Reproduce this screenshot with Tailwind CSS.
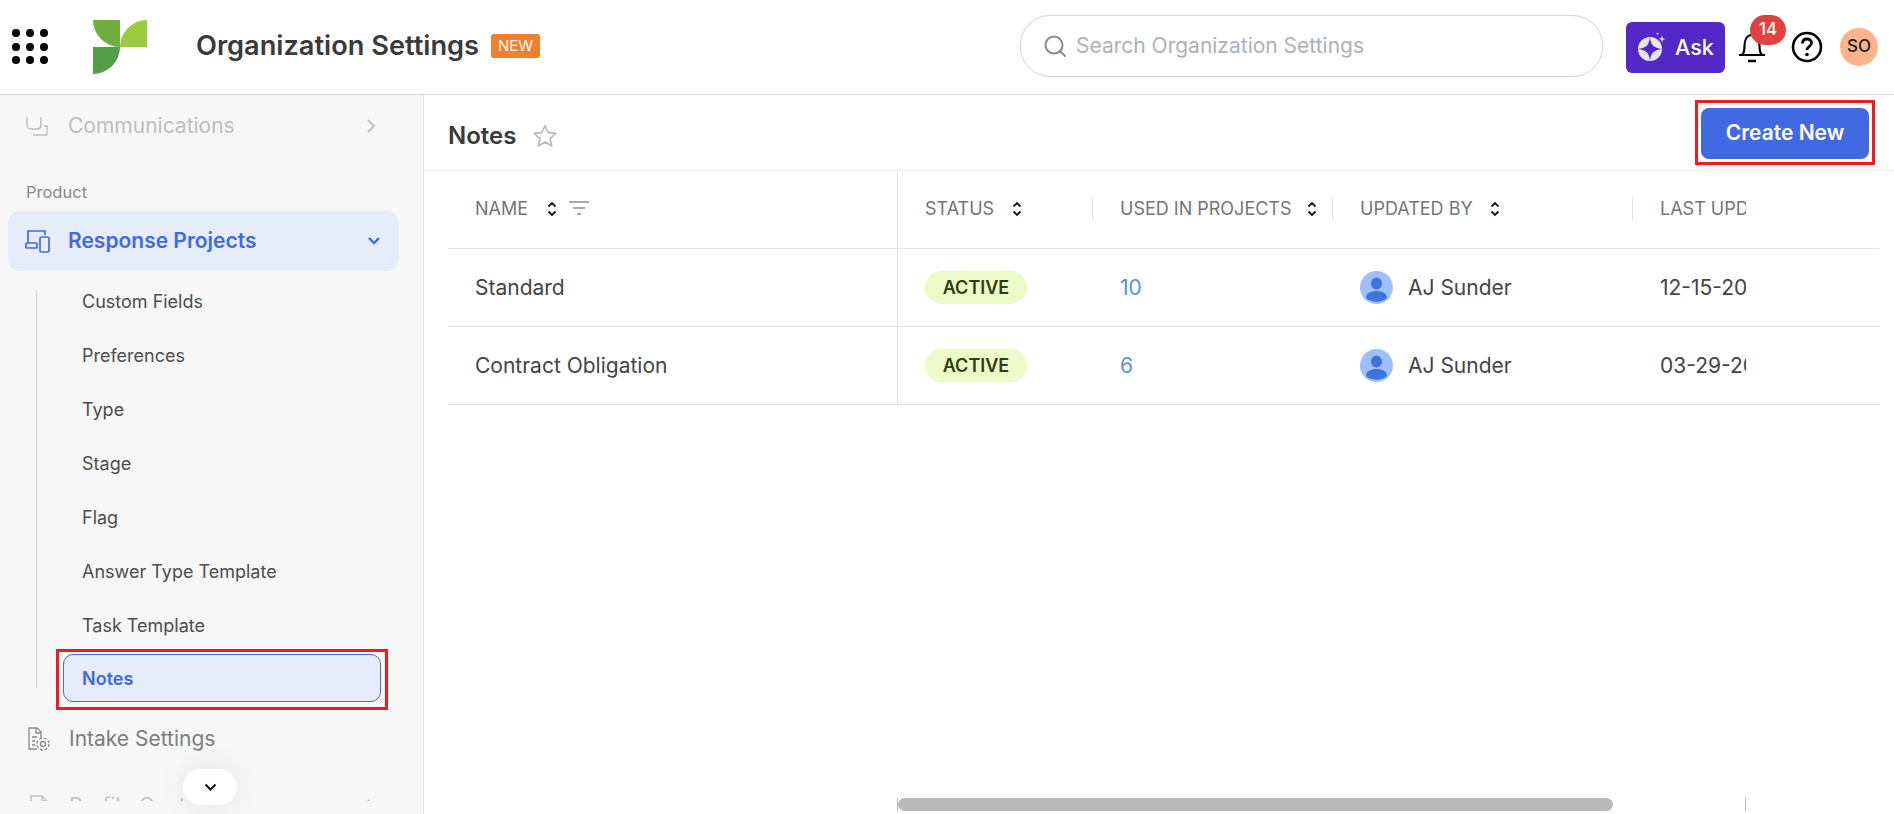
<!doctype html>
<html>
<head>
<meta charset="utf-8">
<script src="https://cdn.jsdelivr.net/npm/@tailwindcss/browser@4"></script>
</head>
<body class="h-[814px] w-[1894px] overflow-hidden bg-white font-['Inter',sans-serif] text-[#444]">
<header class="flex h-[95px] items-center border-b border-[#d4d4d4] bg-white">
  <svg class="ml-[12px] h-[36px] w-[40px]" viewBox="0 0 40 36" fill="#000"><circle cx="4" cy="4" r="4"/><circle cx="18" cy="4" r="4"/><circle cx="32" cy="4" r="4"/><circle cx="4" cy="18" r="4"/><circle cx="18" cy="18" r="4"/><circle cx="32" cy="18" r="4"/><circle cx="4" cy="31" r="4"/><circle cx="18" cy="31" r="4"/><circle cx="32" cy="31" r="4"/></svg>
  <svg class="ml-[41px] mb-[1px] h-[54px] w-[54px]" viewBox="0 0 54 54"><path d="M0 0H27V27A27 27 0 0 1 0 0Z" fill="#70ae40"/><path d="M27 27H54V0A27 27 0 0 0 27 27Z" fill="#9ccb3f"/><path d="M0 27H27A27 27 0 0 1 0 54Z" fill="#549e47"/></svg>
  <h1 class="ml-[49px] -mt-[2px] text-[27.200px] font-semibold whitespace-nowrap text-[#3a3a3a]">Organization Settings</h1>
  <span class="ml-[12px] -mt-[2px] flex h-[24px] w-[49px] items-center justify-center rounded-[3px] bg-[#f07f2f] text-[15px] text-white">NEW</span>
  <div class="ml-[480px] -mt-[2px] flex h-[62px] w-[583px] items-center rounded-[30px] border border-[#d4d4d4] pl-[22px]">
    <svg class="h-[24px] w-[24px]" viewBox="0 0 24 24" fill="none" stroke="#8a8a8a" stroke-width="2"><circle cx="11" cy="11" r="8.500"/><path d="M17 17l5 5" stroke-linecap="round"/></svg>
    <span class="ml-[9px] text-[21px] text-[#abb2b9]">Search Organization Settings</span>
  </div>
  <button class="ml-[23px] flex h-[51px] w-[99px] items-center rounded-[6px] bg-[#5229c7] pl-[12px] text-[21.500px] font-medium text-white">
    <svg class="h-[32px] w-[32px] shrink-0" viewBox="0 0 32 32"><circle cx="12" cy="18" r="12" fill="#e6e6e6"/><path fill="#5229c7" d="M12 6c.8 8 3.500 11 12 12c-8.500 1-11.200 4-12 12c-.8-8-3.500-11-12-12c8.500-1 11.200-4 12-12Z"/><path fill="#e6e6e6" d="M24 4c.4 3 1 3.700 3.500 4c-2.500.3-3.100 1-3.500 4c-.4-3-1-3.700-3.500-4c2.500-.3 3.100-1 3.500-4ZM19.500 1c.2 1.200.5 1.500 1.500 1.700c-1 .2-1.300.5-1.500 1.700c-.2-1.200-.5-1.500-1.500-1.700c1-.2 1.300-.5 1.500-1.700Z"/></svg>
    <span class="ml-[5px]">Ask</span>
  </button>
  <div class="relative ml-[13px] h-[32px] w-[28px]">
    <svg class="h-[32px] w-[28px]" viewBox="0 0 28 32" fill="none" stroke="#000" stroke-width="2.200"><path d="M1 24h26M4 24c2-2 2.500-4 2.500-9C6.500 9 9 4 14 4s7.500 5 7.500 11c0 5 .5 7 2.500 9"/><path d="M10 30h8" stroke-width="2.500"/></svg>
    <span class="absolute top-[-16px] left-[12px] flex h-[30px] w-[36px] items-center justify-center rounded-full bg-[#e04141] text-[17px] font-medium text-white">14</span>
  </div>
  <svg class="ml-[25px] h-[32px] w-[32px]" viewBox="0 0 32 32" fill="none" stroke="#000"><circle cx="16" cy="16" r="14" stroke-width="2.600"/><path d="M11.500 12.500c0-3 2-4.500 4.500-4.500s4.500 1.600 4.500 4c0 3.500-4.500 3.500-4.500 7" stroke-width="2.800"/><circle cx="16" cy="23.500" r="1.800" fill="#000" stroke="none"/></svg>
  <span class="ml-[17px] flex h-[38px] w-[38px] items-center justify-center rounded-full bg-[#ffb38a] text-[17px] font-medium text-[#222]">SO</span>
</header>

<div class="flex h-[719px]">
  <aside class="relative h-full w-[424px] shrink-0 overflow-hidden border-r border-[#e4e4e4] bg-[#f7f7f7]">
    <div class="flex h-[62px] items-center pr-[47px] pl-[25px] opacity-35">
      <svg class="h-[24px] w-[24px]" viewBox="0 0 24 24" fill="none" stroke="#555" stroke-width="1.500"><path d="M2 3v8a4 4 0 0 0 4 4h7a4 4 0 0 0 3-3V3"/><path d="M8 21h13a1 1 0 0 0 1-1v-8h-3"/></svg>
      <span class="ml-[19px] flex-1 text-[21px] text-[#555]">Communications</span>
      <svg class="h-[14px] w-[10px]" viewBox="0 0 10 14" fill="none" stroke="#555" stroke-width="1.800"><path d="M2 1l6 6-6 6"/></svg>
    </div>
    <div class="mt-[25px] pl-[26px] text-[16.500px] leading-[20px] text-[#8a8a8a]">Product</div>
    <div class="mx-[8px] mt-[9px] flex h-[60px] w-[391px] items-center rounded-[12px] bg-[#e6ecfa] pr-[18px] pl-[17px] text-[#4169e1]">
      <svg class="h-[26px] w-[26px] shrink-0" viewBox="0 0 26 26" fill="none" stroke="#4169e1" stroke-width="1.700"><path d="M3 15V3h17v4"/><rect x="1" y="15" width="11" height="5" rx="1"/><rect x="15" y="9" width="9" height="15" rx="1.500"/></svg>
      <span class="ml-[17px] flex-1 text-[21px] font-semibold">Response Projects</span>
      <svg class="h-[10px] w-[14px]" viewBox="0 0 14 10" fill="none" stroke="#4169e1" stroke-width="2.400"><path d="M2 2l5 5 5-5"/></svg>
    </div>
    <div class="relative mt-[19px] ml-[36px] flow-root h-[398px] border-l border-[#d4d4d4]">
      <ul class="-mt-[16px] text-[18px] text-[#4d4d4d]">
        <li class="flex h-[54px] items-center pl-[45px]">Custom Fields</li>
        <li class="flex h-[54px] items-center pl-[45px]">Preferences</li>
        <li class="flex h-[54px] items-center pl-[45px]">Type</li>
        <li class="flex h-[54px] items-center pl-[45px]">Stage</li>
        <li class="flex h-[54px] items-center pl-[45px]">Flag</li>
        <li class="flex h-[54px] items-center pl-[45px]">Answer Type Template</li>
        <li class="flex h-[54px] items-center pl-[45px]">Task Template</li>
      </ul>
      <div class="absolute top-[364px] left-[26px] flex h-[48px] w-[318px] items-center rounded-[10px] border border-[#4169e1] bg-[#e6ecfa] pl-[18px] text-[18px] font-semibold text-[#4169e1]">Notes</div>
    </div>
    <div class="mt-[24px] flex h-[54px] items-center pl-[27px] opacity-75">
      <svg class="h-[24px] w-[24px]" viewBox="0 0 24 24" fill="none" stroke="#666" stroke-width="1.300"><path d="M14 11V5l-4-4H2v21h8"/><path d="M9 1v5h5M5 10h5M5 14h3M5 18h3"/><circle cx="16" cy="17" r="2.500"/><circle cx="16" cy="17" r="6" stroke-dasharray="3 1.700"/></svg>
      <span class="ml-[18px] text-[21px] text-[#555]">Intake Settings</span>
    </div>
    <div class="mt-[13px] flex h-[54px] items-center pr-[47px] pl-[27px] opacity-30">
      <svg class="h-[24px] w-[24px]" viewBox="0 0 24 24" fill="none" stroke="#555" stroke-width="1.500"><path d="M15 2H4v20h16V7zM15 2v5h5"/></svg>
      <span class="ml-[18px] flex-1 text-[21px] text-[#555]">Profile Center</span>
      <svg class="h-[14px] w-[10px]" viewBox="0 0 10 14" fill="none" stroke="#555" stroke-width="1.800"><path d="M2 1l6 6-6 6"/></svg>
    </div>
    <div class="absolute top-0 left-0 h-[24px] w-full bg-gradient-to-b from-[#f7f7f7] to-transparent"></div>
    <div class="absolute bottom-0 left-0 h-[13px] w-full bg-[#f7f7f7]"></div>
    <button class="absolute top-[674px] left-[183px] flex h-[36px] w-[54px] items-center justify-center rounded-full bg-white shadow-[0_0_30px_rgba(0,0,0,0.08)]">
      <svg class="h-[9px] w-[13px]" viewBox="0 0 13 9" fill="none" stroke="#111" stroke-width="2"><path d="M1.500 1.500l5 5 5-5"/></svg>
    </button>
  </aside>

  <main class="relative min-w-0 flex-1">
    <div class="flex h-[76px] items-center justify-between border-b border-[#ececec] pr-[25px] pl-[24px]">
      <div class="mt-[7px] flex items-center">
        <h2 class="text-[24px] font-semibold text-[#3a3a3a]">Notes</h2>
        <svg class="ml-[16px] h-[26px] w-[26px]" viewBox="0 0 26 26" fill="none" stroke="#bcbcbc" stroke-width="1.800"><path d="M13 2.500l3.200 7 7.600.8-5.700 5.100 1.600 7.500L13 19l-6.700 3.900 1.600-7.500-5.700-5.100 7.600-.8z" stroke-linejoin="round"/></svg>
      </div>
      <button class="mt-[1px] h-[51px] w-[168px] rounded-[8px] bg-[#4169e1] text-[21px] font-semibold text-white">Create New</button>
    </div>
    <div class="ml-[24px] w-[1432px] text-[21px]">
      <div class="flex h-[78px] items-center border-b border-[#e1e4ed] pb-[2px] text-[18px] text-[#757575]">
        <div class="flex h-[78px] w-[450px] items-center border-r border-[#e1e4ed] pl-[27px]">NAME
          <svg class="ml-[19px] h-[16px] w-[10px]" viewBox="0 0 10 16" fill="none" stroke="#111" stroke-width="1.800"><path d="M1.500 5.500L5 2l3.500 3.500M1.500 10.500L5 14l3.500-3.500"/></svg>
          <svg class="ml-[12px] h-[15px] w-[20px]" viewBox="0 0 20 15" fill="#aaa"><rect width="20" height="2"/><rect x="4" y="6" width="12" height="2"/><rect x="8" y="12" width="4" height="2"/></svg>
        </div>
        <div class="flex h-[24px] w-[195px] items-center border-r border-[#e1e4ed] pl-[27px]">STATUS
          <svg class="ml-[18px] h-[16px] w-[10px]" viewBox="0 0 10 16" fill="none" stroke="#111" stroke-width="1.800"><path d="M1.500 5.500L5 2l3.500 3.500M1.500 10.500L5 14l3.500-3.500"/></svg>
        </div>
        <div class="flex h-[24px] w-[240px] items-center border-r border-[#e1e4ed] pl-[27px] whitespace-nowrap">USED IN PROJECTS
          <svg class="ml-[15px] h-[16px] w-[10px]" viewBox="0 0 10 16" fill="none" stroke="#111" stroke-width="1.800"><path d="M1.500 5.500L5 2l3.500 3.500M1.500 10.500L5 14l3.500-3.500"/></svg>
        </div>
        <div class="flex h-[24px] w-[300px] items-center border-r border-[#e1e4ed] pl-[27px]">UPDATED BY
          <svg class="ml-[17px] h-[16px] w-[10px]" viewBox="0 0 10 16" fill="none" stroke="#111" stroke-width="1.800"><path d="M1.500 5.500L5 2l3.500 3.500M1.500 10.500L5 14l3.500-3.500"/></svg>
        </div>
        <div class="w-[113px] overflow-hidden pl-[27px] whitespace-nowrap">LAST UPDATED</div>
      </div>
      <div class="flex h-[78px] items-center border-b border-[#e1e4ed]">
        <div class="flex h-full w-[450px] items-center border-r border-[#e1e4ed] pl-[27px]">Standard</div>
        <div class="w-[195px] pl-[27px]"><span class="flex h-[33px] w-[102px] items-center justify-center rounded-full bg-[#ecf9c8] text-[18px] font-semibold text-[#2f3d12]">ACTIVE</span></div>
        <div class="w-[240px] pl-[27px] text-[#5a8fe0]">10</div>
        <div class="flex w-[300px] items-center pl-[27px]">
          <svg class="h-[33px] w-[33px]" viewBox="0 0 33 33"><circle cx="16.500" cy="16.500" r="16.500" fill="#9dbffa"/><ellipse cx="16.500" cy="12.500" rx="5.500" ry="6" fill="#3f74dc"/><path d="M6 27c0-5 5-7 10.500-7S27 22 27 27a16.500 16.500 0 0 1-21 0Z" fill="#3f74dc"/></svg>
          <span class="ml-[15px] whitespace-nowrap">AJ Sunder</span>
        </div>
        <div class="w-[113px] overflow-hidden pl-[27px] whitespace-nowrap">12-15-2023</div>
      </div>
      <div class="flex h-[78px] items-center border-b border-[#e1e4ed]">
        <div class="flex h-full w-[450px] items-center border-r border-[#e1e4ed] pl-[27px]">Contract Obligation</div>
        <div class="w-[195px] pl-[27px]"><span class="flex h-[33px] w-[102px] items-center justify-center rounded-full bg-[#ecf9c8] text-[18px] font-semibold text-[#2f3d12]">ACTIVE</span></div>
        <div class="w-[240px] pl-[27px] text-[#5a8fe0]">6</div>
        <div class="flex w-[300px] items-center pl-[27px]">
          <svg class="h-[33px] w-[33px]" viewBox="0 0 33 33"><circle cx="16.500" cy="16.500" r="16.500" fill="#9dbffa"/><ellipse cx="16.500" cy="12.500" rx="5.500" ry="6" fill="#3f74dc"/><path d="M6 27c0-5 5-7 10.500-7S27 22 27 27a16.500 16.500 0 0 1-21 0Z" fill="#3f74dc"/></svg>
          <span class="ml-[15px] whitespace-nowrap">AJ Sunder</span>
        </div>
        <div class="w-[113px] overflow-hidden pl-[27px] whitespace-nowrap">03-29-2023</div>
      </div>
    </div>
    <div class="absolute top-[703px] left-[473px] h-[13px] w-[849px] border-x border-[#b9b9b9]">
      <div class="h-full w-[715px] rounded-full bg-[#b9b9b9]"></div>
    </div>
  </main>
</div>

<div class="pointer-events-none absolute top-[100px] left-[1695px] h-[65px] w-[180px] border-[3px] border-[#ed1c24]"></div>
<div class="pointer-events-none absolute top-[649px] left-[56px] h-[61px] w-[332px] border-[3px] border-[#ed1c24]"></div>
</body>
</html>
